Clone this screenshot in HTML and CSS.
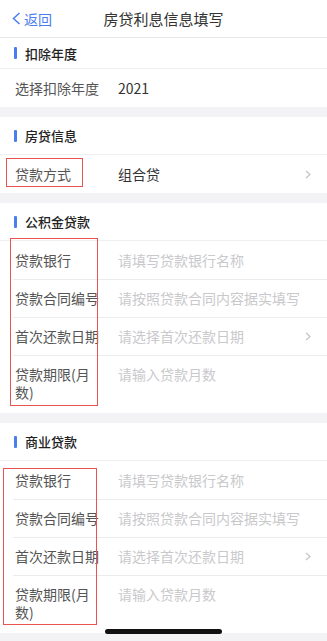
FILE: index.html
```html
<!DOCTYPE html>
<html lang="zh">
<head>
    <meta charset="UTF-8">
    <meta name="viewport" content="width=device-width, initial-scale=1.0">
    <link rel="stylesheet" href="styles.css">
    <title>房贷利息信息填写</title>
</head>
<body>
    <div class="page">
        <div class="nav">
            <div class="back">
                <svg width="9" height="13" viewBox="0 0 9 13"><polyline points="7.5,1 1.5,6.5 7.5,12" fill="none" stroke="#4a7df0" stroke-width="1.5"/></svg>
                <span>返回</span>
            </div>
            <div class="title">房贷利息信息填写</div>
        </div>

        <div class="group">
            <div class="head first">扣除年度</div>
            <div class="row">
                <div class="label">选择扣除年度</div>
                <div class="value">2021</div>
            </div>
        </div>

        <div class="group">
            <div class="head">房贷信息</div>
            <div class="row">
                <div class="label">贷款方式</div>
                <div class="value">组合贷</div>
                <svg class="arrow" width="6" height="9" viewBox="0 0 6 9"><polyline points="1,1 5,4.5 1,8" fill="none" stroke="#c4c4c4" stroke-width="1.2"/></svg>
            </div>
            <div class="mark mark-type"></div>
        </div>

        <div class="group">
            <div class="head">公积金贷款</div>
            <div class="row">
                <div class="label">贷款银行</div>
                <div class="value hint">请填写贷款银行名称</div>
            </div>
            <div class="row">
                <div class="label">贷款合同编号</div>
                <div class="value hint">请按照贷款合同内容据实填写</div>
            </div>
            <div class="row">
                <div class="label">首次还款日期</div>
                <div class="value hint">请选择首次还款日期</div>
                <svg class="arrow" width="6" height="9" viewBox="0 0 6 9"><polyline points="1,1 5,4.5 1,8" fill="none" stroke="#c4c4c4" stroke-width="1.2"/></svg>
            </div>
            <div class="row tall">
                <div class="label">贷款期限(月数)</div>
                <div class="value hint">请输入贷款月数</div>
            </div>
            <div class="mark mark-fund"></div>
        </div>

        <div class="group">
            <div class="head">商业贷款</div>
            <div class="row">
                <div class="label">贷款银行</div>
                <div class="value hint">请填写贷款银行名称</div>
            </div>
            <div class="row">
                <div class="label">贷款合同编号</div>
                <div class="value hint">请按照贷款合同内容据实填写</div>
            </div>
            <div class="row">
                <div class="label">首次还款日期</div>
                <div class="value hint">请选择首次还款日期</div>
                <svg class="arrow" width="6" height="9" viewBox="0 0 6 9"><polyline points="1,1 5,4.5 1,8" fill="none" stroke="#c4c4c4" stroke-width="1.2"/></svg>
            </div>
            <div class="row tall">
                <div class="label">贷款期限(月数)</div>
                <div class="value hint">请输入贷款月数</div>
            </div>
            <div class="mark mark-biz"></div>
        </div>

        <div class="home-bar"></div>
    </div>
</body>
</html>
```

FILE: styles.css
```css
*{
    margin:0px;
    padding:0px;
    box-sizing: border-box;
}
body{
    background-color: #f3f3f6;
    font-family: "Noto Sans CJK SC", "Noto Sans", sans-serif;
    color: #333;
}
.page{
    position: relative;
    width: 327px;
    height: 641px;
    overflow: hidden;
}
.nav{
    position: relative;
    height: 38px;
    background-color: white;
    border-bottom: 1px solid #e8e8ea;
    display: flex;
    align-items: center;
    justify-content: center;
}
.nav .back{
    position: absolute;
    left: 12px;
    top: 0;
    height: 37px;
    display: flex;
    align-items: center;
    gap: 3px;
    color: #4a7df0;
    font-size: 14px;
}
.nav .title{
    font-size: 15px;
    color: #333;
}
.group{
    position: relative;
    background-color: white;
    margin-bottom: 10px;
}
.head{
    height: 38px;
    display: flex;
    align-items: center;
    padding-left: 25px;
    font-size: 13px;
    font-weight: 500;
    color: #222;
    position: relative;
    border-bottom: 1px solid #efeff2;
}
.head.first{
    height: 31px;
}
.head::before{
    content: "";
    position: absolute;
    left: 14px;
    top: 50%;
    width: 3px;
    height: 12px;
    margin-top: -6px;
    border-radius: 1px;
    background-color: #4a7df0;
}
.row{
    min-height: 38px;
    display: flex;
    align-items: center;
    padding: 0 15px;
    position: relative;
}
.row + .row::before{
    content: "";
    position: absolute;
    left: 13px;
    right: 0;
    top: 0;
    height: 1px;
    background-color: #ececee;
}
.row.tall{
    min-height: 58px;
    align-items: flex-start;
    padding-top: 10px;
}
.label{
    width: 90px;
    flex-shrink: 0;
    font-size: 14px;
    line-height: 18px;
    color: #555;
}
.value{
    margin-left: 13px;
    flex: 1;
    font-size: 14px;
    line-height: 18px;
    color: #333;
}
.value.hint{
    color: #c9c9cc;
}
.arrow{
    flex-shrink: 0;
    margin-right: 1px;
}
.mark{
    position: absolute;
    border: 1.5px solid #ea5450;
}
.mark-type{
    left: 6px;
    top: 41px;
    width: 77px;
    height: 29px;
}
.mark-fund{
    left: 10px;
    top: 35px;
    width: 88px;
    height: 168px;
}
.mark-biz{
    left: 3px;
    top: 45px;
    width: 94px;
    height: 157px;
}
.home-bar{
    position: absolute;
    left: 105px;
    top: 629px;
    width: 117px;
    height: 5px;
    border-radius: 3px;
    background-color: #111;
}
```
